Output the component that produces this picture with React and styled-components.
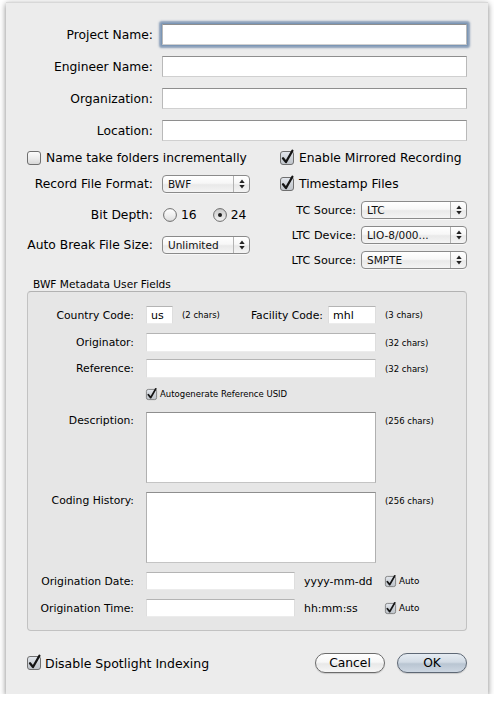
import React from "react";
import styled, { createGlobalStyle } from "styled-components";

const Global = createGlobalStyle`
  html, body { margin: 0; padding: 0; background: #ffffff; }
  body { font-family: "DejaVu Sans", "Liberation Sans", sans-serif; color: #000; }
  * { box-sizing: border-box; }
`;

const Page = styled.div`
  padding: 2px 6px 0 6px;
`;

const Sheet = styled.div`
  width: 482px;
  height: 692px;
  background: #ececec;
  border-top: 1px solid #d8d8d8;
  box-shadow: 0 2px 6px rgba(0, 0, 0, 0.5);
  padding: 21px 21px 21px 21px;
  display: flex;
  flex-direction: column;
`;

const TopGrid = styled.div`
  display: grid;
  grid-template-columns: 126px 1fr;
  column-gap: 9px;
  row-gap: 11px;
  align-items: center;
`;

const Label = styled.span`
  font-size: ${(p) => p.$size || 12.3}px;
  text-align: right;
  white-space: nowrap;
  padding-right: ${(p) => p.$pr || 0}px;
  align-self: ${(p) => (p.$top ? "start" : "center")};
  margin-top: ${(p) => p.$mt || 0}px;
`;

const Note = styled.span`
  font-size: ${(p) => p.$size || 8.5}px;
  white-space: nowrap;
  align-self: ${(p) => (p.$top ? "start" : "center")};
  margin-top: ${(p) => p.$mt || 0}px;
  margin-left: ${(p) => p.$ml || 0}px;
`;

const TextField = styled.input`
  display: block;
  width: ${(p) => (p.$w ? `${p.$w}px` : "100%")};
  height: ${(p) => p.$h || 21}px;
  background: #fff;
  border: 1px solid;
  border-color: ${(p) =>
    p.$soft ? "#b4b4b4 #dedede #ececec #dedede" : "#8e8e8e #b9b9b9 #d0d0d0 #b9b9b9"};
  font-family: "DejaVu Sans", sans-serif;
  font-size: 11px;
  padding: 0 4px;
  margin: 0 0 0 ${(p) => p.$ml || 0}px;
  outline: none;
  box-shadow: ${(p) =>
    p.$focus ? "0 0 0 1px #7b96b5, 0 0 2px 3px rgba(120, 145, 175, 0.85)" : "none"};
  border-radius: ${(p) => (p.$focus ? 1 : 0)}px;
`;

const TextArea = styled.textarea`
  display: block;
  width: 230px;
  height: 71px;
  background: #fff;
  border: 1px solid;
  border-color: #8e8e8e #b0b0b0 #c4c4c4 #b0b0b0;
  resize: none;
  margin: 0;
  padding: 2px;
  outline: none;
`;

const Columns = styled.div`
  display: flex;
  justify-content: space-between;
  margin-top: 9px;
`;

const Col = styled.div`
  width: ${(p) => p.$w}px;
  display: flex;
  flex-direction: column;
`;

const FormRow = styled.div`
  display: grid;
  grid-template-columns: ${(p) => p.$cols};
  column-gap: ${(p) => p.$gap || 0}px;
  align-items: center;
  height: ${(p) => p.$h}px;
  margin-top: ${(p) => p.$mt || 0}px;
`;

const CheckRow = styled.label`
  display: flex;
  align-items: center;
  gap: ${(p) => p.$gap || 5}px;
  height: ${(p) => p.$h || 16}px;
  margin-top: ${(p) => p.$mt || 0}px;
  font-size: ${(p) => p.$size || 12.3}px;
  white-space: nowrap;
`;

const BoxSvg = styled.svg`
  flex: none;
  overflow: visible;
  display: block;
`;

function CheckBox({ size = 14, checked }) {
  const s = size;
  return (
    <BoxSvg width={s} height={s} viewBox="0 0 14 14">
      <defs>
        <linearGradient id="cbg" x1="0" y1="0" x2="0" y2="1">
          <stop offset="0" stopColor="#fdfdfd" />
          <stop offset="0.5" stopColor="#ededed" />
          <stop offset="1" stopColor="#d6d6d6" />
        </linearGradient>
        <linearGradient id="cbg2" x1="0" y1="0" x2="0" y2="1">
          <stop offset="0" stopColor="#e4e8ee" />
          <stop offset="0.5" stopColor="#cdd2d8" />
          <stop offset="1" stopColor="#bfc4ca" />
        </linearGradient>
      </defs>
      <rect
        x="0.5"
        y="0.5"
        width="13"
        height="13"
        rx="2.5"
        fill={checked ? "url(#cbg2)" : "url(#cbg)"}
        stroke="#6f6f6f"
      />
      {checked && (
        <path
          d="M3 7.3 L6 11 L12.4 -0.2"
          fill="none"
          stroke="#141414"
          strokeWidth="2.3"
          strokeLinecap="round"
          strokeLinejoin="round"
        />
      )}
    </BoxSvg>
  );
}

function Radio({ selected }) {
  return (
    <BoxSvg width="14" height="14" viewBox="0 0 14 14">
      <defs>
        <linearGradient id="rbg" x1="0" y1="0" x2="0" y2="1">
          <stop offset="0" stopColor="#ffffff" />
          <stop offset="0.5" stopColor="#f0f0f0" />
          <stop offset="1" stopColor="#dcdcdc" />
        </linearGradient>
        <linearGradient id="rbg2" x1="0" y1="0" x2="0" y2="1">
          <stop offset="0" stopColor="#c8c8c8" />
          <stop offset="0.5" stopColor="#dedede" />
          <stop offset="1" stopColor="#f4f4f4" />
        </linearGradient>
      </defs>
      <circle
        cx="7"
        cy="7"
        r="6.4"
        fill={selected ? "url(#rbg2)" : "url(#rbg)"}
        stroke="#6c6c6c"
      />
      {selected && <circle cx="7" cy="7" r="2" fill="#1e1e1e" />}
    </BoxSvg>
  );
}

const RadioGroup = styled.div`
  display: flex;
  align-items: center;
  font-size: 12.3px;
`;

const RadioItem = styled.label`
  display: flex;
  align-items: center;
  gap: 4px;
  margin-left: ${(p) => p.$ml || 0}px;
`;

const Popup = styled.div`
  width: ${(p) => (p.$w ? `${p.$w}px` : "100%")};
  height: 18px;
  border: 1px solid #8a8a8a;
  border-radius: 4px;
  background: linear-gradient(#ffffff 0%, #f7f7f7 45%, #e9e9e9 55%, #f4f4f4 100%);
  display: flex;
  align-items: stretch;
  font-size: 10.5px;
  box-shadow: 0 1px 0 rgba(255, 255, 255, 0.6);
`;

const PopupText = styled.span`
  flex: 1;
  display: flex;
  align-items: center;
  padding-left: 5px;
  color: #111;
  white-space: nowrap;
  overflow: hidden;
`;

const PopupArrows = styled.span`
  width: 16px;
  border-left: 1px solid #b3b3b3;
  display: flex;
  align-items: center;
  justify-content: center;
`;

function PopupButton({ value, w }) {
  return (
    <Popup $w={w}>
      <PopupText>{value}</PopupText>
      <PopupArrows>
        <svg width="6" height="10" viewBox="0 0 6 10">
          <path d="M0.3 4 L3 0.6 L5.7 4 Z" fill="#222" />
          <path d="M0.3 6 L3 9.4 L5.7 6 Z" fill="#222" />
        </svg>
      </PopupArrows>
    </Popup>
  );
}

const GroupTitle = styled.div`
  font-size: 10.6px;
  line-height: 12px;
  margin-top: 9px;
  padding-left: 6px;
`;

const GroupBox = styled.div`
  margin-top: 1px;
  border: 1px solid #c2c2c2;
  border-top-color: #b2b2b2;
  border-radius: 4px;
  background: #e6e6e6;
  padding: 14px 0 13px 0;
  display: flex;
  flex-direction: column;
`;

const FieldLine = styled.div`
  display: flex;
  align-items: center;
`;

const Spacer = styled.div`
  flex: 1;
`;

const BottomRow = styled.div`
  display: flex;
  align-items: center;
  height: 20px;
  margin-top: 22px;
`;

const Button = styled.button`
  width: 70px;
  height: 20px;
  border-radius: 10px;
  border: 1px solid ${(p) => (p.$default ? "#5e6875" : "#6c6c6c")};
  background: ${(p) =>
    p.$default
      ? "linear-gradient(#e6ecf2 0%, #d2dbe5 45%, #b9c5d2 55%, #cdd7e2 100%)"
      : "linear-gradient(#ffffff 0%, #f7f7f7 45%, #e8e8e8 55%, #f6f6f6 100%)"};
  font-family: "DejaVu Sans", sans-serif;
  font-size: 12.3px;
  color: #000;
  padding: 0;
  margin-left: ${(p) => p.$ml || 0}px;
  box-shadow: 0 1px 1px rgba(0, 0, 0, 0.15);
`;

const boxCols = "109px 230px 1fr";

export default function App() {
  return (
    <Page>
      <Global />
      <Sheet>
        <TopGrid>
          <Label>Project Name:</Label>
          <TextField $focus readOnly />
          <Label>Engineer Name:</Label>
          <TextField readOnly />
          <Label>Organization:</Label>
          <TextField readOnly />
          <Label>Location:</Label>
          <TextField readOnly />
        </TopGrid>

        <Columns>
          <Col $w={223}>
            <CheckRow>
              <CheckBox />
              Name take folders incrementally
            </CheckRow>
            <FormRow $cols="126px 1fr" $gap={9} $h={18} $mt={9}>
              <Label>Record File Format:</Label>
              <PopupButton value="BWF" />
            </FormRow>
            <FormRow $cols="126px 1fr" $gap={9} $h={18} $mt={13}>
              <Label>Bit Depth:</Label>
              <RadioGroup>
                <RadioItem $ml={1}>
                  <Radio />
                  16
                </RadioItem>
                <RadioItem $ml={16}>
                  <Radio selected />
                  24
                </RadioItem>
              </RadioGroup>
            </FormRow>
            <FormRow $cols="126px 1fr" $gap={9} $h={18} $mt={12}>
              <Label>Auto Break File Size:</Label>
              <PopupButton value="Unlimited" />
            </FormRow>
          </Col>

          <Col $w={187}>
            <CheckRow>
              <CheckBox checked />
              Enable Mirrored Recording
            </CheckRow>
            <CheckRow $mt={10}>
              <CheckBox checked />
              Timestamp Files
            </CheckRow>
            <FormRow $cols="1fr 106px" $gap={5} $h={18} $mt={9}>
              <Label $size={11.2}>TC Source:</Label>
              <PopupButton value="LTC" />
            </FormRow>
            <FormRow $cols="1fr 106px" $gap={5} $h={18} $mt={7}>
              <Label $size={11.2}>LTC Device:</Label>
              <PopupButton value="LIO-8/000..." />
            </FormRow>
            <FormRow $cols="1fr 106px" $gap={5} $h={18} $mt={7}>
              <Label $size={11.2}>LTC Source:</Label>
              <PopupButton value="SMPTE" />
            </FormRow>
          </Col>
        </Columns>

        <GroupTitle>BWF Metadata User Fields</GroupTitle>
        <GroupBox>
          <FormRow $cols={boxCols} $gap={9} $h={18}>
            <Label $size={10.8} $pr={3}>Country Code:</Label>
            <FieldLine>
              <TextField $w={27} $h={18} $soft defaultValue="us" readOnly />
              <Note $ml={9}>(2 chars)</Note>
              <Spacer />
              <Label $size={10.8}>Facility Code:</Label>
              <TextField $w={48} $h={18} $ml={5} $soft defaultValue="mhl" readOnly />
            </FieldLine>
            <Note>(3 chars)</Note>
          </FormRow>
          <FormRow $cols={boxCols} $gap={9} $h={19} $mt={9}>
            <Label $size={10.8} $pr={3}>Originator:</Label>
            <TextField $h={19} $soft readOnly />
            <Note>(32 chars)</Note>
          </FormRow>
          <FormRow $cols={boxCols} $gap={9} $h={19} $mt={7}>
            <Label $size={10.8} $pr={3}>Reference:</Label>
            <TextField $h={19} $soft readOnly />
            <Note>(32 chars)</Note>
          </FormRow>
          <FormRow $cols={boxCols} $gap={9} $h={12} $mt={10}>
            <span />
            <CheckRow $h={12} $gap={3} $size={8.5}>
              <CheckBox size={11} checked />
              Autogenerate Reference USID
            </CheckRow>
            <span />
          </FormRow>
          <FormRow $cols={boxCols} $gap={9} $h={71} $mt={12}>
            <Label $size={10.8} $pr={3} $top $mt={2}>Description:</Label>
            <TextArea readOnly />
            <Note $top $mt={4}>(256 chars)</Note>
          </FormRow>
          <FormRow $cols={boxCols} $gap={9} $h={71} $mt={9}>
            <Label $size={10.8} $pr={3} $top $mt={2}>Coding History:</Label>
            <TextArea readOnly />
            <Note $top $mt={4}>(256 chars)</Note>
          </FormRow>
          <FormRow $cols={boxCols} $gap={9} $h={18} $mt={9}>
            <Label $size={10.8} $pr={3}>Origination Date:</Label>
            <FieldLine>
              <TextField $w={149} $h={18} $soft readOnly />
              <Note $size={10.9} $ml={9}>yyyy-mm-dd</Note>
            </FieldLine>
            <CheckRow $h={12} $gap={3} $size={8.8}>
              <CheckBox size={11} checked />
              Auto
            </CheckRow>
          </FormRow>
          <FormRow $cols={boxCols} $gap={9} $h={18} $mt={9}>
            <Label $size={10.8} $pr={3}>Origination Time:</Label>
            <FieldLine>
              <TextField $w={149} $h={18} $soft readOnly />
              <Note $size={10.9} $ml={9}>hh:mm:ss</Note>
            </FieldLine>
            <CheckRow $h={12} $gap={3} $size={8.8}>
              <CheckBox size={11} checked />
              Auto
            </CheckRow>
          </FormRow>
        </GroupBox>

        <BottomRow>
          <CheckRow $h={16} $gap={4} $size={12.5}>
            <CheckBox checked />
            Disable Spotlight Indexing
          </CheckRow>
          <Spacer />
          <Button>Cancel</Button>
          <Button $default $ml={12}>OK</Button>
        </BottomRow>
      </Sheet>
    </Page>
  );
}
